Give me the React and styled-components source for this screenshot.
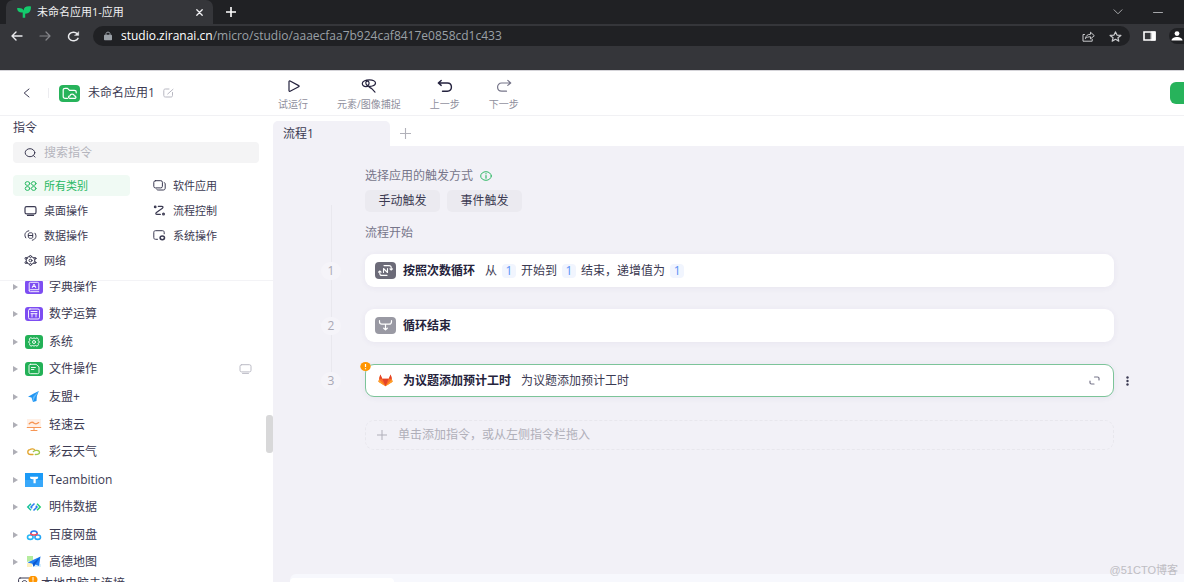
import React, { useState } from "react";
import styled, { createGlobalStyle } from "styled-components";

const GlobalStyle = createGlobalStyle`
  * {
    box-sizing: border-box;
  }
  html, body, #root {
    height: 100%;
    margin: 0;
  }
  body {
    overflow: hidden;
    font-family: "Open Sans", "Noto Sans CJK SC", sans-serif;
    font-size: 12px;
    line-height: 16px;
    color: #3b3a52;
  }
  button, input {
    font: inherit;
    color: inherit;
    border: 0;
    padding: 0;
    margin: 0;
    background: none;
  }
  button {
    cursor: pointer;
  }
  svg {
    display: block;
    flex: none;
  }
`;

const Page = styled.div`
  height: 100vh;
  display: flex;
  flex-direction: column;
  overflow: hidden;
  background: #fff;
`;

//Browser window
const Browser = styled.div`
  flex: none;
  background: #35363a;
  border-bottom: 1px solid #d5d4d9;
  padding-bottom: 23px;
`;
const TitleBar = styled.div`
  height: 24px;
  display: flex;
  align-items: center;
  background: #202124;
  padding: 0 18px 0 6px;
  color: #fff;
`;
const BrowserTab = styled.div`
  width: 207px;
  height: 24px;
  display: flex;
  align-items: center;
  gap: 6px;
  padding: 0 9px 0 11px;
  border-radius: 7px 7px 0 0;
  background: #35363a;
  font-size: 11px;
  color: #f1f1f3;
`;
const Grow = styled.span`
  flex: 1;
  white-space: nowrap;
`;
const IconButton = styled.button`
  flex: none;
  width: ${(props) => props.$width || 16}px;
  height: 16px;
  display: flex;
  align-items: center;
  justify-content: center;
  color: ${(props) => props.$color || "inherit"};
`;
const WindowButtons = styled.div`
  margin-left: auto;
  display: flex;
  gap: 24px;
  color: #a5a6a9;
`;
const AddressRow = styled.div`
  height: 22px;
  margin-top: 1px;
  display: flex;
  align-items: center;
  color: #e9eaed;
  overflow: hidden;
`;
const NavButtons = styled.div`
  display: flex;
  gap: 12px;
  padding: 0 12px 0 9px;
`;
const AddressBar = styled.div`
  flex: 1;
  height: 20px;
  display: flex;
  align-items: center;
  padding: 0 7px 0 10px;
  border-radius: 10px;
  background: #202124;
  color: #9aa0a6;
`;
const Url = styled.span`
  flex: 1;
  padding-left: 8px;
  white-space: nowrap;
  b {
    font-weight: 400;
    color: #fff;
  }
`;
const AddressActions = styled.div`
  display: flex;
  gap: 11px;
  color: #c9cacd;
`;
const BrowserActions = styled.div`
  display: flex;
  align-items: center;
  gap: 12px;
  padding-left: 11px;
`;
const Avatar = styled.span`
  width: 15px;
  height: 16px;
  border-radius: 8px 0 0 8px;
  background: #202124;
  padding: 3px 0 0 2px;
  overflow: hidden;
`;

//App header
const Header = styled.header`
  flex: none;
  height: 45px;
  display: flex;
  align-items: center;
  border-bottom: 1px solid #f1f1f4;
`;
const HeaderTitle = styled.div`
  width: 273px;
  display: flex;
  align-items: center;
  padding-left: 18px;
`;
const Divider = styled.span`
  width: 1px;
  height: 10px;
  margin: 0 10px 0 14px;
  background: #ececf0;
`;
const AppName = styled.h1`
  margin: 0 8px;
  font-size: 12px;
  font-weight: 400;
`;
const Tools = styled.nav`
  flex: 1;
  display: flex;
  gap: 29px;
  padding: 4px 0 0 5px;
`;
const ToolButton = styled.button`
  display: flex;
  flex-direction: column;
  align-items: center;
  gap: 4px;
  font-size: 10px;
  line-height: 14px;
  color: #8f8f9d;
  white-space: nowrap;
  svg {
    color: ${(props) => (props.$muted ? "#77768a" : "#24223e")};
  }
`;
const PublishButton = styled.button`
  width: 14px;
  height: 22px;
  border-radius: 6px 0 0 6px;
  background: #27b35b;
`;

const Body = styled.div`
  flex: 1;
  min-height: 0;
  display: flex;
`;

//Sidebar
const Sidebar = styled.aside`
  flex: none;
  width: 273px;
  display: flex;
  flex-direction: column;
`;
const SidebarTop = styled.div`
  flex: none;
  padding: 4px 14px 9px 13px;
  border-bottom: 1px solid #f3f3f6;
`;
const SidebarTitle = styled.h2`
  margin: 0 0 6px;
  font-size: 12px;
  font-weight: 400;
`;
const SearchBox = styled.label`
  height: 21px;
  display: flex;
  align-items: center;
  gap: 8px;
  padding: 0 11px;
  margin-bottom: 12px;
  border-radius: 4px;
  background: #f4f4f5;
  input {
    flex: 1;
    min-width: 0;
    outline: none;
  }
  input::placeholder {
    color: #b4b4bd;
    opacity: 1;
  }
`;
const Categories = styled.div`
  display: grid;
  grid-template-columns: 1fr 1fr;
  gap: 4px 12px;
`;
const CategoryButton = styled.button`
  height: 21px;
  display: flex;
  align-items: center;
  gap: 7px;
  padding-left: 11px;
  border-radius: 4px;
  font-size: 11px;
  color: ${(props) => (props.$active ? "#27b862" : "#3b3a52")};
  background: ${(props) => (props.$active ? "#f0faf4" : "none")};
`;
const ListArea = styled.div`
  flex: 1;
  min-height: 0;
  display: flex;
  overflow: hidden;
`;
const CommandList = styled.ul`
  flex: 1;
  display: flex;
  flex-direction: column;
  list-style: none;
  margin: -8px 0 0;
  padding: 0;
`;
const CommandItem = styled.li`
  flex: 1;
  min-height: 24px;
  display: flex;
  align-items: center;
  padding: 0 14px 0 12px;
`;
const CommandName = styled.span`
  flex: 1;
  padding-left: 6px;
`;
const Scrollbar = styled.div`
  width: 7px;
  padding-top: 134px;
`;
const ScrollThumb = styled.div`
  height: 38px;
  border-radius: 3px;
  background: #d8d8d9;
`;
const SidebarStatus = styled.div`
  flex: none;
  height: 6px;
  display: flex;
  align-items: flex-start;
  overflow: hidden;
  padding-left: 18px;
  white-space: nowrap;
`;

//Workspace
const Workspace = styled.main`
  flex: 1;
  min-width: 0;
  display: flex;
  flex-direction: column;
  position: relative;
`;
const FlowTabs = styled.div`
  flex: none;
  height: 30px;
  display: flex;
  align-items: flex-end;
`;
const FlowTab = styled.button`
  width: 117px;
  height: 25px;
  padding-left: 10px;
  text-align: left;
  border-radius: 5px 5px 0 0;
  background: #f2f1f7;
`;
const AddFlow = styled.button`
  width: 30px;
  height: 25px;
  display: flex;
  align-items: center;
  justify-content: center;
  color: #b1b1b9;
`;
const Canvas = styled.div`
  flex: 1;
  padding: 22px 48px 0 40px;
  background: linear-gradient(#e9e8ee, #e9e8ee) no-repeat 58px 59px / 1px 175px,
    #f2f1f7;
`;
const SectionLabel = styled.div`
  display: flex;
  align-items: center;
  gap: 7px;
  margin: 0 0 ${(props) => props.$space}px 52px;
  color: #77768a;
`;
const Triggers = styled.div`
  display: flex;
  gap: 7px;
  margin: 0 0 13px 52px;
`;
const TriggerButton = styled.button`
  width: 75px;
  height: 22px;
  border-radius: 5px;
  background: #ebeaf0;
`;
const Steps = styled.div`
  display: flex;
  flex-direction: column;
  gap: 22px;
`;
const StepRow = styled.div`
  display: grid;
  grid-template-columns: 36px 1fr 22px;
  align-items: center;
`;
const StepNumber = styled.span`
  justify-self: center;
  width: 20px;
  height: 18px;
  line-height: 18px;
  border-radius: 9px;
  text-align: center;
  color: #a9a8b4;
  background: #f5f4f9;
`;
const Card = styled.div`
  position: relative;
  height: 33px;
  display: flex;
  align-items: center;
  margin-left: 16px;
  padding: 0 ${(props) => (props.$active ? 13 : 14)}px 0 ${(props) => (props.$active ? 9 : 10)}px;
  border: ${(props) => (props.$active ? "1px solid #7cc499" : "0")};
  border-radius: 9px;
  background: #fff;
  box-shadow: 0 1px 6px rgba(60, 50, 120, 0.06);
`;
const StepTitle = styled.strong`
  margin: 0 10px 0 7px;
  font-weight: 700;
  color: #25233c;
`;
const StepText = styled.div`
  flex: 1;
  display: flex;
  align-items: center;
  gap: 5px;
`;
const Value = styled.button`
  width: 14px;
  height: 14px;
  border-radius: 4px;
  line-height: 14px;
  color: #5b8ff5;
  background: #f1f5fe;
`;
const Warning = styled.span`
  position: absolute;
  top: -3px;
  left: -6px;
`;
const MoreButton = styled(IconButton)`
  margin-left: 5px;
`;
const AddStep = styled.button`
  grid-column: 2;
  height: 30px;
  display: flex;
  align-items: center;
  gap: 11px;
  margin: 1px 0 0 16px;
  padding-left: 11px;
  border: 1px dashed #e8e7ed;
  border-radius: 9px;
  color: #b0afb9;
`;
const BottomWrap = styled.div`
  flex: none;
  padding-left: 17px;
  background: #f2f1f7;
`;
const BottomPanel = styled.div`
  height: 8px;
  padding-top: 4px;
  background: #f7f8fd;
  border-radius: 6px 0 0 0;
`;
const BottomTab = styled.div`
  width: 104px;
  height: 4px;
  border-radius: 4px 4px 0 0;
  background: #fff;
`;
const Watermark = styled.span`
  position: absolute;
  right: 6px;
  bottom: 4px;
  font-family: "Liberation Sans", "Noto Sans CJK SC", sans-serif;
  font-size: 11px;
  color: #bebdc3;
`;

const Svg = ({ w, h, children, ...rest }) => (
  <svg
    width={w}
    height={h}
    viewBox={`0 0 ${w} ${h}`}
    fill="none"
    stroke="currentColor"
    strokeLinecap="round"
    strokeLinejoin="round"
    aria-hidden="true"
    {...rest}
  >
    {children}
  </svg>
);

const MonitorIcon = (props) => (
  <Svg w={13} h={10} {...props}>
    <rect x="1" y="0.7" width="11" height="7.2" rx="1.600" />
    <path d="M3.500 9.400h6" />
  </Svg>
);

const categories = [
  {
    name: "所有类别",
    icon: (
      <Svg w={13} h={10}>
        <ellipse cx="3.500" cy="2.500" rx="2.300" ry="1.900" />
        <ellipse cx="9.700" cy="2.500" rx="2.300" ry="1.900" />
        <ellipse cx="3.500" cy="7.500" rx="2.300" ry="1.900" />
        <ellipse cx="9.700" cy="7.500" rx="2.300" ry="1.900" />
      </Svg>
    ),
  },
  {
    name: "软件应用",
    icon: (
      <Svg w={13} h={11}>
        <rect x="0.8" y="0.7" width="8.600" height="7.200" rx="1.600" />
        <path d="M11.200 2.600c.7.2 1 .7 1 1.300v4.200c0 1.200-.7 1.900-1.900 1.900H5.200c-.8 0-1.400-.3-1.700-.9" />
      </Svg>
    ),
  },
  { name: "桌面操作", icon: <MonitorIcon strokeWidth="1.200" /> },
  {
    name: "流程控制",
    icon: (
      <Svg w={13} h={11} strokeWidth="1.200">
        <circle cx="2.200" cy="1.900" r=".8" />
        <circle cx="10.500" cy="9" r=".9" />
        <path d="M5.300 1.300h3.400c1.500 0 1.700 1.200.7 1.900L3.400 7.500c-1 .8-.7 1.900.6 1.900h3.300" />
      </Svg>
    ),
  },
  {
    name: "数据操作",
    icon: (
      <Svg w={13} h={11}>
        <path d="M4.300 3.700c0-1.300 4.400-1.300 4.400 0v3.700c0 1.300-4.400 1.300-4.400 0zM4.300 5.500h4.400" />
        <path d="M1.800 7.900C-.2 5 1 1.500 4.800.8M11 3.200c2 2.800 1.200 6-2.700 7" />
      </Svg>
    ),
  },
  {
    name: "系统操作",
    icon: (
      <Svg w={13} h={11}>
        <path d="M4.500 9.300H2.500C1.400 9.300.8 8.700.8 7.700V2.300C.8 1.300 1.400.7 2.500.7h7c1.100 0 1.700.6 1.700 1.600v1.500" />
        <ellipse cx="9.300" cy="7.800" rx="2.200" ry="1.900" strokeWidth="1.500" />
      </Svg>
    ),
  },
  {
    name: "网络",
    icon: (
      <Svg w={13} h={11}>
        <ellipse cx="6.500" cy="5.500" rx="1.500" ry="1.300" />
        <path d="M6.500 1.200 10.700 3.300v4.400L6.500 9.800 2.300 7.700V3.300z" />
        <g fill="#fff">
          <circle cx="6.500" cy="1.500" r="1" />
          <circle cx="11" cy="3.400" r="1" />
          <circle cx="11" cy="7.600" r="1" />
          <circle cx="6.500" cy="9.500" r="1" />
          <circle cx="2" cy="7.600" r="1" />
          <circle cx="2" cy="3.400" r="1" />
        </g>
      </Svg>
    ),
  },
];

const commands = [
  {
    name: "字典操作",
    icon: (
      <Svg w={18} h={14} stroke="#fff">
        <rect width="18" height="14" rx="3" fill="#7d4df2" stroke="none" />
        <path d="M4.200 10.200V3.600c0-.9.5-1.300 1.400-1.300h6.800c.9 0 1.400.4 1.400 1.300v6.100H5.300c-1.500 0-1.500 2 0 2h8.500M7.300 7.600 9 4l1.700 3.600M7.900 6.500h2.200" strokeWidth=".9" />
      </Svg>
    ),
  },
  {
    name: "数学运算",
    icon: (
      <Svg w={18} h={14} stroke="#fff">
        <rect width="18" height="14" rx="3" fill="#7d4df2" stroke="none" />
        <rect x="3.500" y="2" width="11" height="10" rx="1.500" strokeWidth=".9" />
        <path d="M6 4.500h6M7 6.700v3.200M11 6.700v3.200M6 6.700h6" strokeWidth=".9" />
      </Svg>
    ),
  },
  {
    name: "系统",
    icon: (
      <Svg w={18} h={14} stroke="#fff">
        <rect width="18" height="14" rx="3" fill="#23b157" stroke="none" />
        <path d="m5.800 2.800 1.800.7L9 2.900l1.400.6 1.800-.7 1.300 1.700-.6 1 1.800 1.500-1.800 1.500.6 1-1.300 1.700-1.800-.7-1.400.6-1.400-.6-1.800.7-1.300-1.700.6-1L3.300 7l1.800-1.500-.6-1z" strokeWidth=".9" />
        <circle cx="9" cy="7" r="1.500" strokeWidth=".9" />
      </Svg>
    ),
  },
  {
    name: "文件操作",
    local: true,
    icon: (
      <Svg w={18} h={14} stroke="#fff">
        <rect width="18" height="14" rx="3" fill="#23b157" stroke="none" />
        <path d="M5.500 2.300h5.600L14 4.900v5.300c0 .9-.5 1.500-1.500 1.500h-7c-1 0-1.500-.6-1.500-1.500V3.800c0-.9.5-1.500 1.500-1.500zM6.400 5.500h4M6.400 7.500h2.500" strokeWidth=".9" />
      </Svg>
    ),
  },
  {
    name: "友盟+",
    icon: (
      <Svg w={18} h={14} stroke="none">
        <path d="M13.800 1 8.800 3.500 3 6.700l3.500.9L8 11.900l3.500-.8.4-5z" fill="#2196f3" />
        <path d="m13.800 1-6 6.300.2 4.600 1.800-4.300z" fill="#65bbfa" />
      </Svg>
    ),
  },
  {
    name: "轻速云",
    icon: (
      <Svg w={18} h={14} stroke="#f79655">
        <path d="M2 1h14v8H2z" fill="#fff0e6" stroke="none" />
        <path d="M4.200 5.800c2.200-2.300 3.400-2 5-.6 1.400 1.100 2.600.9 4.500-.6" strokeWidth="1.300" />
        <path d="M2.200 9.500h13.600M9 9.500v2.800M6 12.500h6" />
      </Svg>
    ),
  },
  {
    name: "彩云天气",
    icon: (
      <Svg w={18} h={14} strokeWidth="1.300">
        <path d="M8 9.500H5.700C1.900 9.500 2 5 5 4.600c1.500-1.200 4-1 4.800.5" stroke="#e2a42b" />
        <path d="M8.300 6.600c1.400-1.800 6.200-1.900 6.200.9 0 2-2.200 2-4.200 2" stroke="#a1c84b" />
      </Svg>
    ),
  },
  {
    name: "Teambition",
    icon: (
      <Svg w={18} h={14} stroke="none">
        <path d="M0 0h18v14H0z" fill="#1b9af7" />
        <path d="M0 7h18v7H0z" fill="#38a8fa" />
        <path d="M5 3.800h8.200c0 1.700-.7 2.500-2.500 2.500v4H8.500v-4H7.300C5.700 6.300 5 5.500 5 3.800z" fill="#fff" />
      </Svg>
    ),
  },
  {
    name: "明伟数据",
    icon: (
      <Svg w={18} h={14} strokeWidth="1.500" strokeLinecap="butt" strokeLinejoin="miter">
        <path d="M6 3.800 2.800 7 6 10.200" stroke="#18c39b" />
        <path d="m12 3.800 3.200 3.200-3.200 3.200" stroke="#24cf73" />
        <path d="M9.500 3.500 6 7l1.200 1.200M8.500 10.500 12 7l-1.200-1.200" stroke="#287cf0" />
      </Svg>
    ),
  },
  {
    name: "百度网盘",
    icon: (
      <Svg w={18} h={14} strokeWidth="1.600">
        <ellipse cx="5.300" cy="9.200" rx="2.800" ry="2.200" stroke="#24b5f5" />
        <ellipse cx="12.700" cy="9.200" rx="2.800" ry="2.200" stroke="#24a5f5" />
        <path d="M5.800 5.600c0-3.500 6.400-3.500 6.400 0" stroke="#2b7cf0" />
        <path d="M5.800 5.600c.4 2 6 1.900 6.400 0" stroke="#f04b62" />
      </Svg>
    ),
  },
  {
    name: "高德地图",
    icon: (
      <Svg w={18} h={14} stroke="none">
        <path d="M2 1h6v4L2 7z" fill="#b5ec9e" />
        <path d="M2 8h5v4H2z" fill="#fdf0c0" />
        <path d="M9 9h7v3H9z" fill="#d8effd" />
        <path d="M15.500 1.500 2.500 7.500l5 1.300 1.200 3 1.700-2.200 3.600 1.500z" fill="#1c7cf2" />
        <path d="m15.500 1.500-8 7.300 1.200 3z" fill="#0c57cc" />
      </Svg>
    ),
  },
];

const WarningIcon = () => (
  <svg width="11" height="9" viewBox="0 0 11 9" aria-hidden="true">
    <ellipse cx="5.500" cy="4.500" rx="5.200" ry="4.500" fill="#ff9500" />
    <path d="M5.500 2v3M5.500 6.200v1" stroke="#fff" strokeWidth="1.200" />
  </svg>
);

const PlusIcon = ({ size = 10, ...rest }) => (
  <svg width={size} height={size} viewBox="0 0 10 10" stroke="currentColor" aria-hidden="true" {...rest}>
    <path d="M0 5h10M5 0v10" />
  </svg>
);

const LoopIcon = () => (
  <Svg w={21} h={17} stroke="#fff" strokeWidth="1.100">
    <rect width="21" height="17" rx="4" fill="#6c6b78" stroke="none" />
    <path d="M8.500 10.500V6.500l4 4v-4" />
    <path d="M9 3.600h5c1.500 0 2.200.7 2.200 2v2.200M14.900 6.800l1.300 1.200 1.300-1.200M12 13.400H7c-1.500 0-2.200-.7-2.200-2V9.200M3.500 10.200 4.800 9l1.300 1.200" />
  </Svg>
);

const LoopEndIcon = () => (
  <Svg w={21} h={17} stroke="#fff" strokeWidth="1.200">
    <rect width="21" height="17" rx="4" fill="#9999a3" stroke="none" />
    <path d="M4.500 3.700v1c0 1.800.8 2.500 2.500 2.500h7c1.700 0 2.500-.7 2.500-2.500v-1M10.500 7.200v5.500M8.700 11.200l1.800 1.700 1.800-1.700" />
  </Svg>
);

const GitlabIcon = () => (
  <Svg w={21} h={17} stroke="none">
    <path d="m10.500 14.200-7.100-4.400 1.900-7.300 2 4.200h6.400l2-4.200 1.900 7.300z" fill="#fc6d26" />
    <path d="m10.500 14.200-3.200-7.500h6.400z" fill="#e24329" />
    <path d="m3.400 9.800.7-2.300 6.400 6.700zM17.600 9.800l-.7-2.300-6.400 6.700z" fill="#fca326" />
    <path d="m5.300 2.500-1.200 4.200h3.200zM15.700 2.500l1.200 4.200h-3.200z" fill="#e24329" />
  </Svg>
);

const BrowserChrome = () => (
  <Browser>
    <TitleBar>
      <BrowserTab>
        <Svg w={14} h={12} stroke="none" fill="#14ca6c">
          <path d="M14 .5C9.500-.2 7 1 6.600 4.500 5.500 2.300 3.400 1.800 0 2.200c.4 3.400 2.500 4.700 5.700 4.300v5.300h2.500V7.700C12 7.700 14 5.500 14 .5z" />
        </Svg>
        <Grow>未命名应用1-应用</Grow>
        <IconButton $width={10} aria-label="关闭标签页">
          <Svg w={7} h={7} strokeWidth="1.300">
            <path d="m.8.8 5.400 5.400M6.200.8.8 6.200" />
          </Svg>
        </IconButton>
      </BrowserTab>
      <IconButton $width={36} aria-label="新标签页">
        <PlusIcon strokeWidth="1.600" />
      </IconButton>
      <WindowButtons>
        <IconButton aria-label="搜索标签页">
          <Svg w={10} h={6}>
            <path d="m1 .8 4 4 4-4" />
          </Svg>
        </IconButton>
        <IconButton aria-label="最小化">
          <Svg w={10} h={3}>
            <path d="M.5 1.500h9" />
          </Svg>
        </IconButton>
      </WindowButtons>
    </TitleBar>
    <AddressRow>
      <NavButtons>
        <IconButton aria-label="后退">
          <Svg w={12} h={10} strokeWidth="1.400">
            <path d="M11 5H1.200M5 1 1 5l4 4" />
          </Svg>
        </IconButton>
        <IconButton aria-label="前进" $color="#85868a">
          <Svg w={12} h={10} strokeWidth="1.200">
            <path d="M1 5h9.800M7 1l4 4-4 4" />
          </Svg>
        </IconButton>
        <IconButton aria-label="重新加载">
          <Svg w={13} h={11} strokeWidth="1.500">
            <path d="M11 7.300A5 4.300 0 1 1 10.300 2.700" />
            <path d="M11.800.7v3.800H7.500z" fill="currentColor" strokeWidth=".3" />
          </Svg>
        </IconButton>
      </NavButtons>
      <AddressBar>
        <Svg w={10} h={10} stroke="none">
          <rect x="1" y="3.700" width="8" height="5.600" rx=".8" fill="currentColor" />
          <path d="M3 4V2.600c0-2 4-2 4 0V4" stroke="currentColor" />
        </Svg>
        <Url>
          <b>studio.ziranai.cn</b>/micro/studio/aaaecfaa7b924caf8417e0858cd1c433
        </Url>
        <AddressActions>
          <IconButton aria-label="分享">
            <Svg w={13} h={11}>
              <path d="M2.500 3.500H1v6.700h9.200V8.300M3.500 7.300c.5-2.800 2.200-4 5-4V1.200l3.800 3.500-3.800 3.200V5.800c-2.200 0-3.700.3-5 1.500z" />
            </Svg>
          </IconButton>
          <IconButton aria-label="收藏">
            <Svg w={13} h={11} strokeWidth="1.200">
              <path d="m6.500.9 1.500 3.200 3.900.3-3 2.300.9 3.400-3.300-1.800-3.300 1.800.9-3.400-3-2.300 3.900-.3z" />
            </Svg>
          </IconButton>
        </AddressActions>
      </AddressBar>
      <BrowserActions>
        <IconButton aria-label="侧边栏">
          <Svg w={13} h={10} stroke="#fff" strokeLinejoin="miter">
            <path d="M1 1h11v8H1z" strokeWidth="1.600" />
            <path d="M8.500 1H12v8H8.500z" fill="#fff" />
          </Svg>
        </IconButton>
        <Avatar>
          <Svg w={12} h={10} stroke="none" fill="#fff">
            <circle cx="6" cy="2.600" r="2.400" />
            <path d="M.5 9.500C.5 4.800 11.500 4.800 11.500 9.500z" />
          </Svg>
        </Avatar>
      </BrowserActions>
    </AddressRow>
  </Browser>
);

const AppHeader = () => (
  <Header>
    <HeaderTitle>
      <IconButton aria-label="返回">
        <Svg w={7} h={10}>
          <path d="M6 1 1.200 5 6 9" />
        </Svg>
      </IconButton>
      <Divider />
      <Svg w={21} h={17} stroke="#fff" strokeWidth="1.200">
        <rect width="21" height="17" rx="4" fill="#27b35b" stroke="none" />
        <path d="M8.500 13.300H6.200c-1.300 0-2-.6-2-1.800V5c0-1.100.7-1.700 2-1.700h2.300l2 2h4.700c1.300 0 2 .6 2 1.700v.8" />
        <path d="M10.800 13.400c-1.800-.2-1.700-2.500.1-2.600.5-2.300 4-2.300 4.500 0 2 .1 2.100 2.600 0 2.600z" />
      </Svg>
      <AppName>未命名应用1</AppName>
      <IconButton $width={11} $color="#b7b7c1" aria-label="重命名">
        <Svg w={11} h={10}>
          <path d="M6 1H2.500C1.300 1 .8 1.500.8 2.500v5c0 1 .5 1.500 1.700 1.500h5.300c1.200 0 1.700-.5 1.700-1.500v-3M4.700 6 10 1.300" />
        </Svg>
      </IconButton>
    </HeaderTitle>
    <Tools>
      <ToolButton>
        <Svg w={14} h={14}>
          <path d="M3 2.600v9c0 .7.500.9 1.100.6l8.600-4.500c.6-.3.600-.8 0-1.100L4.100 2C3.500 1.700 3 1.900 3 2.600z" strokeWidth="1.200" />
        </Svg>
        试运行
      </ToolButton>
      <ToolButton>
        <Svg w={16} h={14} strokeWidth="1.200">
          <path d="M8.500.9C4 .9 1.300 2.400 1.300 4.500c0 1.700 1.600 3.200 3.500 3.200 3 0 4.500-4.800 2-5.500C4.300 1.600 4.300 5 6 6.300c2.800 2.200 8.500.5 8.500-2.300 0-2-2.600-3.100-6-3.100zM7.500 7.300c1 1.800 2.300 1.300 3.500 2.600l3 3.200" />
        </Svg>
        元素/图像捕捉
      </ToolButton>
      <ToolButton>
        <Svg w={16} h={14} strokeWidth="1.400">
          <path d="M4.200 1.400 1.300 4l2.900 2.400M1.500 4h8.800c5.500 0 5.500 8.200 0 8.200H5.500" />
        </Svg>
        上一步
      </ToolButton>
      <ToolButton $muted>
        <Svg w={16} h={14} strokeWidth="1.200">
          <path d="m11.800 1.400 2.900 2.600-2.900 2.400M14.500 4H5.700C.2 4 .2 12.200 5.700 12.200h4.800" />
        </Svg>
        下一步
      </ToolButton>
    </Tools>
    <PublishButton aria-label="发布" />
  </Header>
);

const CommandSidebar = () => {
  const [category, setCategory] = useState("所有类别");
  const [keyword, setKeyword] = useState("");
  return (
    <Sidebar>
      <SidebarTop>
        <SidebarTitle>指令</SidebarTitle>
        <SearchBox>
          <Svg w={12} h={10}>
            <ellipse cx="6" cy="4.700" rx="4.800" ry="4" />
            <path d="m9.500 7.600 1.500 1.500" />
          </Svg>
          <input
            aria-label="搜索指令"
            placeholder="搜索指令"
            value={keyword}
            onChange={(e) => setKeyword(e.target.value)}
          />
        </SearchBox>
        <Categories>
          {categories.map((item) => (
            <CategoryButton
              key={item.name}
              $active={item.name === category}
              onClick={() => setCategory(item.name)}
            >
              {item.icon}
              {item.name}
            </CategoryButton>
          ))}
        </Categories>
      </SidebarTop>
      <ListArea>
        <CommandList>
          {commands.map((item) => (
            <CommandItem key={item.name}>
              <Svg w={13} h={8} stroke="none">
                <path d="M1 1v6l5-3z" fill="#aeaeb6" />
              </Svg>
              {item.icon}
              <CommandName>{item.name}</CommandName>
              {item.local && <MonitorIcon color="#bcbcc6" />}
            </CommandItem>
          ))}
        </CommandList>
        <Scrollbar>
          <ScrollThumb />
        </Scrollbar>
      </ListArea>
      <SidebarStatus>
        <Svg w={23} h={14}>
          <rect x=".6" y="2" width="12" height="9" rx="1.500" />
          <path d="M4 6c1-2 4-2 5 0M4.500 6l3 2" />
          <ellipse cx="15" cy="3.700" rx="4.500" ry="4" fill="#ff9500" stroke="none" />
          <path d="M15 1.500v2.800M15 5.700v.2" stroke="#fff" />
        </Svg>
        本地电脑未连接
      </SidebarStatus>
    </Sidebar>
  );
};

const FlowEditor = () => (
  <Workspace>
    <FlowTabs>
      <FlowTab>流程1</FlowTab>
      <AddFlow aria-label="新增流程">
        <PlusIcon size={11} />
      </AddFlow>
    </FlowTabs>
    <Canvas>
      <SectionLabel $space={6}>
        选择应用的触发方式
        <Svg w={12} h={10} stroke="#32b967">
          <ellipse cx="6" cy="5" rx="5.300" ry="4.300" />
          <path d="M6 4.500v2.700M6 2.700v.1" strokeWidth="1.200" />
        </Svg>
      </SectionLabel>
      <Triggers>
        <TriggerButton>手动触发</TriggerButton>
        <TriggerButton>事件触发</TriggerButton>
      </Triggers>
      <SectionLabel $space={13}>流程开始</SectionLabel>
      <Steps>
        <StepRow>
          <StepNumber>1</StepNumber>
          <Card>
            <LoopIcon />
            <StepTitle>按照次数循环</StepTitle>
            <StepText>
              从<Value>1</Value>
              开始到<Value>1</Value>
              结束，递增值为<Value>1</Value>
            </StepText>
          </Card>
        </StepRow>
        <StepRow>
          <StepNumber>2</StepNumber>
          <Card>
            <LoopEndIcon />
            <StepTitle>循环结束</StepTitle>
          </Card>
        </StepRow>
        <StepRow>
          <StepNumber>3</StepNumber>
          <Card $active>
            <Warning>
              <WarningIcon />
            </Warning>
            <GitlabIcon />
            <StepTitle>为议题添加预计工时</StepTitle>
            <StepText>为议题添加预计工时</StepText>
            <IconButton $width={12} $color="#77768a" aria-label="展开">
              <Svg w={11} h={9} strokeWidth="1.200">
                <path d="M5.500 1H8.500C9.500 1 10 1.400 10 2.200V4M1 5v1.800C1 7.600 1.500 8 2.500 8H5" />
              </Svg>
            </IconButton>
          </Card>
          <MoreButton aria-label="更多">
            <Svg w={3} h={10} stroke="none" fill="currentColor">
              <circle cx="1.500" cy="1.500" r="1.200" />
              <circle cx="1.500" cy="5" r="1.200" />
              <circle cx="1.500" cy="8.500" r="1.200" />
            </Svg>
          </MoreButton>
        </StepRow>
        <StepRow>
          <AddStep>
            <PlusIcon />
            单击添加指令，或从左侧指令栏拖入
          </AddStep>
        </StepRow>
      </Steps>
    </Canvas>
    <BottomWrap>
      <BottomPanel>
        <BottomTab />
      </BottomPanel>
    </BottomWrap>
    <Watermark>@51CTO博客</Watermark>
  </Workspace>
);

function App() {
  return (
    <>
      <GlobalStyle />
      <Page>
        <BrowserChrome />
        <AppHeader />
        <Body>
          <CommandSidebar />
          <FlowEditor />
        </Body>
      </Page>
    </>
  );
}

export default App;
